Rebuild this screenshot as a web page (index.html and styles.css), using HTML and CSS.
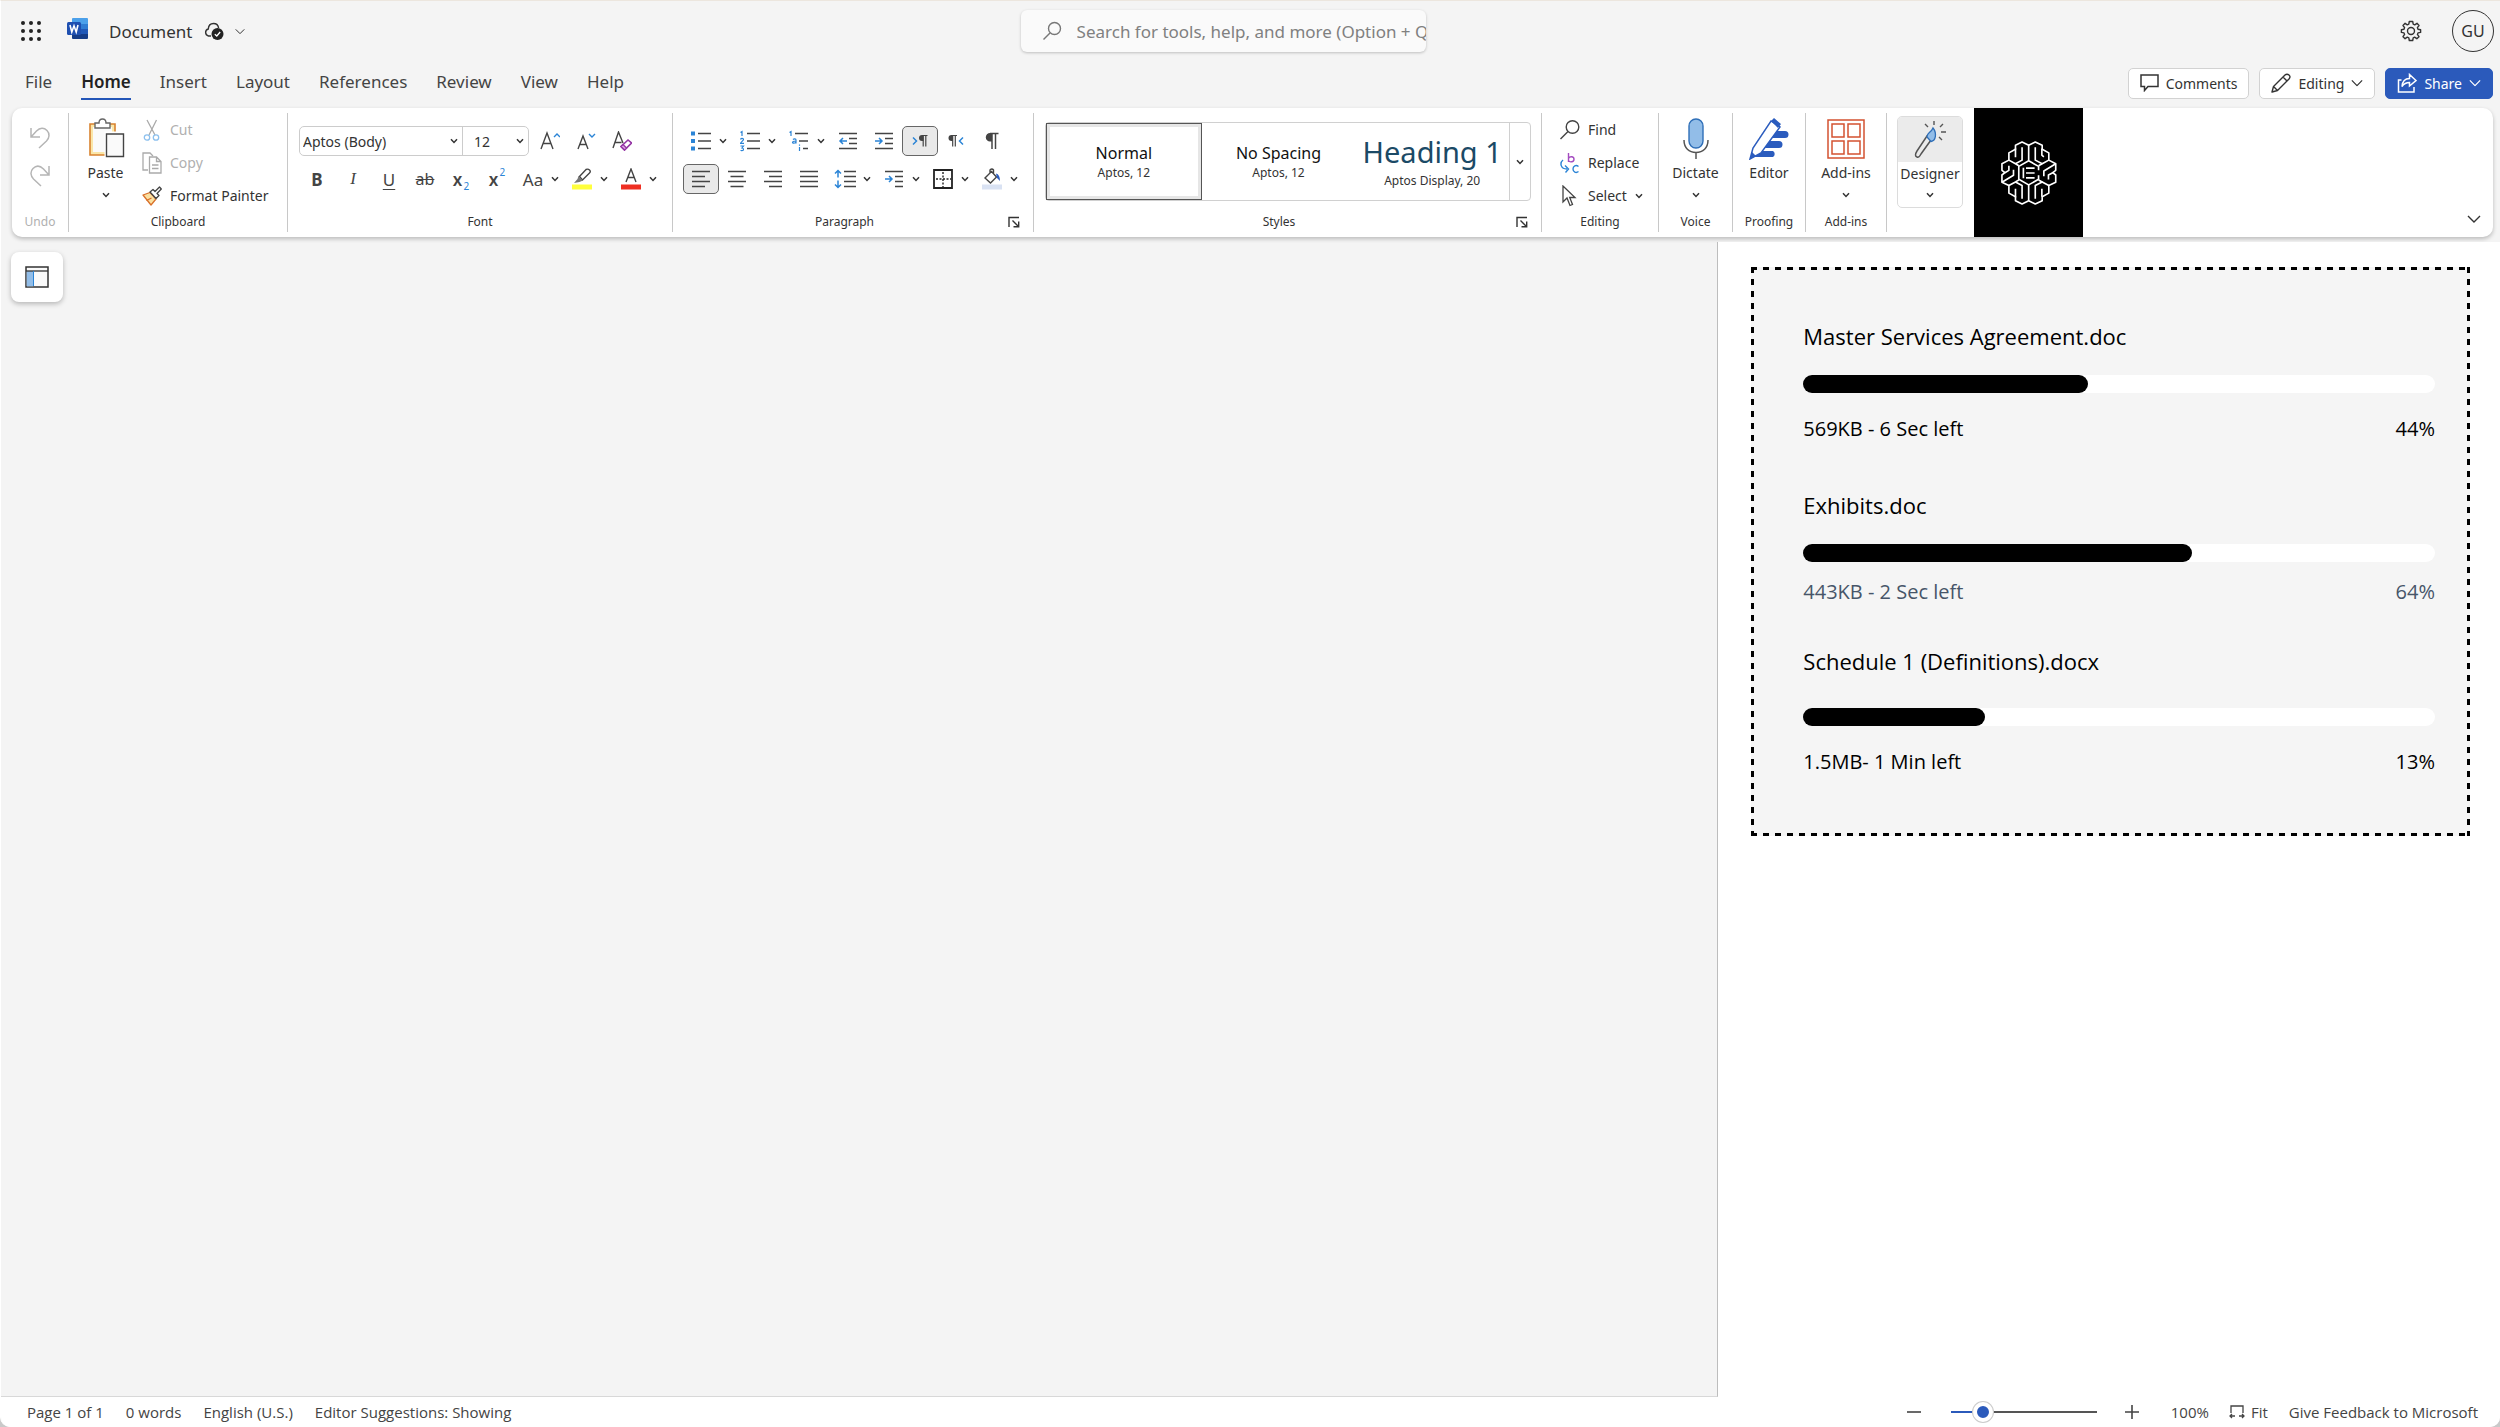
FILE: index.html
```html
<!DOCTYPE html>
<html lang="en">
<head>
<meta charset="utf-8">
<title>Document</title>
<meta name="viewport" content="width=device-width, initial-scale=1">
<link rel="stylesheet" href="styles.css">
</head>
<body>
<svg class="sprite" aria-hidden="true">
  <symbol id="chev" viewBox="0 0 8 6"><path d="M1 1.2 4 4.4 7 1.2" fill="none" stroke="currentColor" stroke-width="1.5"/></symbol>
  <symbol id="chev-lg" viewBox="0 0 14 8"><path d="M1 1 7 7 13 1" fill="none" stroke="currentColor" stroke-width="1.4"/></symbol>
  <symbol id="launch" viewBox="0 0 12 12"><path d="M1 11V1.500H11M4.500 4.500 10.500 10.500M10.700 5.500V10.700H5.500" fill="none" stroke="currentColor" stroke-width="1.4"/></symbol>
</svg>
<div class="app">
  <header class="topbar">
    <div class="brand">
      <button class="plain launcher" aria-label="App launcher"><svg width="22" height="22" viewBox="0 0 22 22" fill="#222"><circle cx="3" cy="3" r="2"/><circle cx="11" cy="3" r="2"/><circle cx="19" cy="3" r="2"/><circle cx="3" cy="11" r="2"/><circle cx="11" cy="11" r="2"/><circle cx="19" cy="11" r="2"/><circle cx="3" cy="19" r="2"/><circle cx="11" cy="19" r="2"/><circle cx="19" cy="19" r="2"/></svg></button>
      <svg class="word" width="22" height="22" viewBox="0 0 22 22"><path d="M6 0H20Q21 0 21 1V6H5V1Q5 0 6 0Z" fill="#4ba0ea"/><path d="M5 6H21V11H5Z" fill="#2f7cd3"/><path d="M5 11H21V16H5Z" fill="#1f58b8"/><path d="M5 16H21V20Q21 21 20 21H6Q5 21 5 20Z" fill="#143c87"/><rect y="4" width="14" height="13" rx="1.500" fill="#1e4fb0"/><path d="M3 7 4.800 14 7 7.800 9.200 14 11 7" fill="none" stroke="#fff" stroke-width="1.600"/></svg>
      <button class="plain doc-name">Document
        <svg width="20" height="20" viewBox="0 0 20 20"><path d="M7 15H4.500A3.600 3.600 0 0 1 4.300 8C4.500 4.500 6.500 2.500 9.500 2.500S14.300 4.500 14.600 7" fill="none" stroke="#333" stroke-width="1.400"/><circle cx="13.500" cy="13" r="6" fill="#222"/><path d="M10.800 13.200 12.800 15 16.200 11" fill="none" stroke="#fff" stroke-width="1.300"/></svg>
        <svg width="10" height="7" viewBox="0 0 14 8"><use href="#chev-lg"/></svg>
      </button>
    </div>
    <label class="search">
      <svg width="20" height="20" viewBox="0 0 20 20" fill="none" stroke="#777" stroke-width="1.400"><circle cx="12.500" cy="7.500" r="6"/><path d="M8 12 1.500 18.500"/></svg>
      <input type="text" aria-label="Search" placeholder="Search for tools, help, and more (Option + Q)">
    </label>
    <div class="account">
      <button class="plain" aria-label="Settings"><svg width="22" height="22" viewBox="0 0 22 22" fill="none" stroke="#333" stroke-width="1.400"><path d="M9.300 1.500H12.700L13.200 4.200 14.700 4.800 17 3.300 19 5.500 17.400 7.600 18 9.200 20.600 9.700V12.400L18 12.900 17.400 14.400 19 16.700 16.800 18.700 14.600 17.200 13.200 17.800 12.700 20.500H9.300L8.800 17.800 7.300 17.200 5.100 18.700 3 16.700 4.600 14.400 4 12.900 1.400 12.400V9.700L4 9.200 4.600 7.600 3 5.500 5.100 3.300 7.300 4.800 8.800 4.200Z" stroke-linejoin="round"/><circle cx="11" cy="11" r="3.500"/></svg></button>
      <button class="plain avatar">GU</button>
    </div>
  </header>

  <nav class="tabs" aria-label="Ribbon tabs">
    <a href="#file">File</a><a href="#home" class="active">Home</a><a href="#insert">Insert</a><a href="#layout">Layout</a><a href="#references">References</a><a href="#review">Review</a><a href="#view">View</a><a href="#help">Help</a>
    <div class="tab-actions">
      <button class="pill"><svg width="19" height="18" viewBox="0 0 19 18" fill="none" stroke="#333" stroke-width="1.500"><path d="M1 1H18V12.500H8L4.500 16.500V12.500H1Z"/></svg>Comments</button>
      <button class="pill"><svg width="20" height="20" viewBox="0 0 20 20" fill="none" stroke="#333" stroke-width="1.400" stroke-linejoin="round"><path d="M1 19 2.500 13.500 14 2Q16 .300 18 2T18 6L6.500 17.500ZM12 4 16 8M2.500 13.500 6.500 17.500"/></svg>Editing<svg width="12" height="8" viewBox="0 0 14 8"><use href="#chev-lg"/></svg></button>
      <button class="pill share"><svg width="20" height="20" viewBox="0 0 20 20" fill="none" stroke="#fff" stroke-width="1.500"><path d="M4.500 7H1.500V19H17V14M5 13.500C5.500 8 8.500 5.500 12.500 5.500V1.500L19 7.500 12.500 13V9.500C9 9.500 7 10.500 5 13.500Z"/></svg>Share<svg width="12" height="8" viewBox="0 0 14 8"><use href="#chev-lg"/></svg></button>
    </div>
  </nav>

  <section class="ribbon" aria-label="Ribbon">
    <div class="group g-undo">
      <div class="group-body stack">
        <button class="plain" aria-label="Undo"><svg width="22" height="24" viewBox="0 0 22 24" fill="none" stroke="#b5b5b5" stroke-width="1.500"><path d="M2 2V11H11M2 11 7.500 5C11 1.500 15 1.500 18 4.500S20.500 12 17.500 15L10 22"/></svg></button>
        <button class="plain" aria-label="Redo"><svg width="22" height="24" viewBox="0 0 22 24" fill="none" stroke="#b5b5b5" stroke-width="1.500"><path d="M20 2V11H11M20 11 14.500 5C11 1.500 7 1.500 4 4.500S1.500 12 4.500 15L12 22"/></svg></button>
      </div>
      <footer class="dim"><span>Undo</span></footer>
    </div>

    <div class="group g-clip">
      <div class="group-body clip">
        <button class="plain big"><svg width="38" height="40" viewBox="0 0 38 40"><path d="M3 6H28V37H3Z" fill="#fae6a8" stroke="#d9822f" stroke-width="1.600"/><path d="M6 9H25V34H6Z" fill="#fafafa"/><path d="M8 10V5H12C12 2.500 13.500 1 15.500 1S19 2.500 19 5H23V10Z" fill="#fff" stroke="#666" stroke-width="1.400"/><path d="M19 15H37V39H19Z" fill="#fff" stroke="#fff" stroke-width="3"/><path d="M19.500 16H36.500V38.500H19.500Z" fill="#fafafa" stroke="#444" stroke-width="1.400"/></svg><span>Paste</span><svg width="8" height="6"><use href="#chev"/></svg></button>
        <div class="lines">
          <button class="plain dim"><svg width="20" height="22" viewBox="0 0 20 22" fill="none" stroke-width="1.300"><path d="M5 1 13 16M14.500 1 7 16" stroke="#aaa"/><circle cx="5" cy="18.500" r="2.700" stroke="#8cc0ee"/><circle cx="14" cy="18.500" r="2.700" stroke="#8cc0ee"/></svg>Cut</button>
          <button class="plain dim"><svg width="20" height="22" viewBox="0 0 20 22" fill="#fff" stroke="#aaa" stroke-width="1.300"><path d="M6 18H1V1H8L11 4"/><path d="M7.500 5H14.500L19 9.500V21H7.500ZM14.500 5V9.500H19M10 13H16.500M10 16.500H16.500"/></svg>Copy</button>
          <button class="plain"><svg width="20" height="20" viewBox="0 0 20 20" stroke-width="1.300" stroke-linejoin="round"><path d="M1 9 8 6.500 14 13 9 19Z" fill="#fae0a0" stroke="#d9702a"/><path d="M4.500 14.500 9.500 12" stroke="#d9702a"/><path d="M8 6 11 3.500 13 5.500 17.500 1 19.300 3 15 7.500 17 9.500 14 12.500Z" fill="#fff" stroke="#444"/></svg>Format Painter</button>
        </div>
      </div>
      <footer><span>Clipboard</span></footer>
    </div>

    <div class="group g-font">
      <div class="group-body rows">
        <div class="row">
          <div class="combo">
            <div class="pick name"><select aria-label="Font name"><option>Aptos (Body)</option></select><svg width="8" height="6"><use href="#chev"/></svg></div>
            <div class="pick size"><select aria-label="Font size"><option>12</option></select><svg width="8" height="6"><use href="#chev"/></svg></div>
          </div>
          <button class="tool" aria-label="Increase font size"><svg width="20" height="20" viewBox="0 0 20 20" fill="none" stroke-width="1.400"><path d="M1 18 7 2 13 18M3.200 12.500H10.800" stroke="#444"/><path d="M14 6 17 3 20 6" stroke="#2b84d6"/></svg></button>
          <button class="tool" aria-label="Decrease font size"><svg width="20" height="20" viewBox="0 0 20 20" fill="none" stroke-width="1.400"><path d="M2 18 7 5 12 18M4 13.500H10" stroke="#444"/><path d="M13 3 16 6 19 3" stroke="#2b84d6"/></svg></button>
          <button class="tool" aria-label="Clear formatting"><svg width="20" height="20" viewBox="0 0 20 20" fill="none" stroke-width="1.400"><path d="M1 17 6.500 1 11 12M3 11.500H9.500" stroke="#444"/><path d="M9 15.500 16 9 19.500 12 12.500 19Z" fill="#fff" stroke="#9434a4" stroke-width="1.600"/><path d="M9 15.500 11 13.500 14.500 17 12.500 19Z" fill="#dca8e4" stroke="#9434a4"/></svg></button>
        </div>
        <div class="row">
          <button class="tool glyph bold">B</button>
          <button class="tool glyph italic">I</button>
          <button class="tool glyph under">U</button>
          <button class="tool glyph strike">ab</button>
          <button class="tool glyph script"><b>x</b><sub>2</sub></button>
          <button class="tool glyph script"><b>x</b><sup>2</sup></button>
          <button class="tool glyph">Aa</button><button class="drop" aria-label="Change case options"><svg width="8" height="6"><use href="#chev"/></svg></button>
          <button class="tool" aria-label="Highlight"><svg width="22" height="22" viewBox="0 0 22 22"><rect x="1" y="16.500" width="20" height="5" fill="#ffff3c"/><path d="M8.500 8.500 15 1.500Q17 .500 18.500 2T18.500 5L11.500 12Z" fill="none" stroke="#444" stroke-width="1.400"/><path d="M7.500 8 12 12.500 8.500 14 3 15 6.500 11Z" fill="#777"/></svg></button><button class="drop" aria-label="Highlight colors"><svg width="8" height="6"><use href="#chev"/></svg></button>
          <button class="tool" aria-label="Font color"><svg width="22" height="22" viewBox="0 0 22 22"><rect x="1" y="16.500" width="20" height="5" fill="#ef2f22"/><path d="M6 14 11 1 16 14M7.800 9.500H14.200" fill="none" stroke="#444" stroke-width="1.400"/></svg></button><button class="drop" aria-label="Font colors"><svg width="8" height="6"><use href="#chev"/></svg></button>
        </div>
      </div>
      <footer><span>Font</span></footer>
    </div>

    <div class="group g-para">
      <div class="group-body rows">
        <div class="row">
          <button class="tool" aria-label="Bullets"><svg width="20" height="20" viewBox="0 0 20 20" stroke="#444" stroke-width="1.500"><path d="M7 2.500H20M7 10H20M7 17.500H20"/><path d="M0 2.500H4M0 10H4M0 17.500H4" stroke="#2b84d6" stroke-width="4"/></svg></button><button class="drop" aria-label="Bullet options"><svg width="8" height="6"><use href="#chev"/></svg></button>
          <button class="tool" aria-label="Numbering"><svg width="20" height="22" viewBox="0 0 20 22" stroke="#444" stroke-width="1.500" fill="none"><path d="M7 3.500H20M7 11H20M7 18.500H20"/><path d="M.500 2.500 2 1.500V6M.500 9.500C1 8 3.500 8 3.500 9.500 3.500 10.500 1 12 .500 13.300H4M.500 16H3.500L2 18Q3.500 18 3.500 19.500T.500 20.500" stroke="#2b84d6" stroke-width="1.200"/></svg></button><button class="drop" aria-label="Numbering options"><svg width="8" height="6"><use href="#chev"/></svg></button>
          <button class="tool" aria-label="Multilevel list"><svg width="20" height="22" viewBox="0 0 20 22" stroke="#444" stroke-width="1.500" fill="none"><path d="M6 3.500H19M10 11H19M14 18.500H19"/><path d="M.500 2.500 2 1.500V6M4 9.500C5 8.500 7 8.500 7 10V13.500M7 11C5 11 3.500 11.500 3.500 12.500S6 13.500 7 12M10.500 17V21M10.500 14.500V15.800" stroke="#2b84d6" stroke-width="1.200"/></svg></button><button class="drop" aria-label="Multilevel options"><svg width="8" height="6"><use href="#chev"/></svg></button>
          <button class="tool" aria-label="Decrease indent"><svg width="20" height="20" viewBox="0 0 20 20" stroke="#444" stroke-width="1.500" fill="none"><path d="M1 2.500H19M11 7.500H19M11 12.500H19M1 17.500H19"/><path d="M9 10H2M5 7 2 10 5 13" stroke="#2b84d6"/></svg></button>
          <button class="tool" aria-label="Increase indent"><svg width="20" height="20" viewBox="0 0 20 20" stroke="#444" stroke-width="1.500" fill="none"><path d="M1 2.500H19M11 7.500H19M11 12.500H19M1 17.500H19"/><path d="M1 10H8M5 7 8 10 5 13" stroke="#2b84d6"/></svg></button>
          <button class="tool on" aria-label="Left to right"><svg width="16" height="14" viewBox="0 0 16 14" fill="none" stroke-width="1.500"><path d="M1 3.500 4.500 7 1 10.500" stroke="#2b84d6"/><path d="M11.200 1.500V12.500M13.800 1.500V12.500M10 1.500H15.500" stroke="#444" stroke-width="1.200"/><path d="M11.500 1H10A2.800 2.800 0 0 0 10 7H11.500Z" fill="#444"/></svg></button>
          <button class="tool" aria-label="Right to left"><svg width="16" height="14" viewBox="0 0 16 14" fill="none" stroke-width="1.500"><path d="M15 3.500 11.500 7 15 10.500" stroke="#2b84d6"/><path d="M4.700 1.500V12.500M7.300 1.500V12.500M3 1.500H9" stroke="#444" stroke-width="1.200"/><path d="M5 1H3.500A2.800 2.800 0 0 0 3.500 7H5Z" fill="#444"/></svg></button>
          <button class="tool" aria-label="Show formatting marks"><svg width="14" height="18" viewBox="0 0 14 18" fill="none"><path d="M7 1.500V17M10.500 1.500V17M5 1.500H13.500" stroke="#444" stroke-width="1.500"/><path d="M7 1H5A4 4 0 0 0 5 9.500H7Z" fill="#444"/></svg></button>
        </div>
        <div class="row">
          <button class="tool on" aria-label="Align left"><svg width="18" height="18" viewBox="0 0 18 18" stroke="#444" stroke-width="1.500"><path d="M0 1.500H18M0 6.500H13M0 11.500H18M0 16.500H13"/></svg></button>
          <button class="tool" aria-label="Center"><svg width="18" height="18" viewBox="0 0 18 18" stroke="#444" stroke-width="1.500"><path d="M0 1.500H18M2.500 6.500H15.500M0 11.500H18M2.500 16.500H15.500"/></svg></button>
          <button class="tool" aria-label="Align right"><svg width="18" height="18" viewBox="0 0 18 18" stroke="#444" stroke-width="1.500"><path d="M0 1.500H18M5 6.500H18M0 11.500H18M5 16.500H18"/></svg></button>
          <button class="tool" aria-label="Justify"><svg width="18" height="18" viewBox="0 0 18 18" stroke="#444" stroke-width="1.500"><path d="M0 1.500H18M0 6.500H18M0 11.500H18M0 16.500H18"/></svg></button>
          <button class="tool" aria-label="Line spacing"><svg width="22" height="20" viewBox="0 0 22 20" stroke="#444" stroke-width="1.500" fill="none"><path d="M10 2.500H22M10 7.500H22M10 12.500H22M10 17.500H22"/><path d="M4 8.500V2M1 4.500 4 1.500 7 4.500M4 11.500V18M1 15.500 4 18.500 7 15.500" stroke="#2b84d6"/></svg></button><button class="drop" aria-label="Spacing options"><svg width="8" height="6"><use href="#chev"/></svg></button>
          <button class="tool" aria-label="Special indent"><svg width="20" height="20" viewBox="0 0 20 20" stroke="#444" stroke-width="1.500" fill="none"><path d="M1 2.500H19M11 7.500H19M11 12.500H19M11 17.500H19"/><path d="M1 10H8M5 7 8 10 5 13" stroke="#2b84d6"/></svg></button><button class="drop" aria-label="Indent options"><svg width="8" height="6"><use href="#chev"/></svg></button>
          <button class="tool" aria-label="Borders"><svg width="20" height="20" viewBox="0 0 20 20" stroke="#222" fill="none"><path d="M1 1H19V19H1Z" stroke-width="1.800"/><path d="M10 3V18M3 10H18" stroke-width="1.400" stroke-dasharray="2 1.500"/></svg></button><button class="drop" aria-label="Border options"><svg width="8" height="6"><use href="#chev"/></svg></button>
          <button class="tool" aria-label="Shading"><svg width="22" height="22" viewBox="0 0 22 22" fill="none"><rect x="1" y="16.500" width="20" height="5" fill="#d9e2f3"/><path d="M4 10 10.500 3.500 15.500 9 9.500 15ZM9 5V2Q11 0 12.500 2V5" stroke="#444" stroke-width="1.400"/><path d="M15 5.500Q19 6.500 19 13L16 10Z" fill="#2b5cbe"/></svg></button><button class="drop" aria-label="Shading colors"><svg width="8" height="6"><use href="#chev"/></svg></button>
        </div>
      </div>
      <footer><span>Paragraph</span><button class="plain" aria-label="Paragraph settings"><svg width="12" height="12"><use href="#launch"/></svg></button></footer>
    </div>

    <div class="group g-styles">
      <div class="group-body">
        <div class="gallery">
          <button class="style selected"><span class="sample">Normal</span><small>Aptos, 12</small></button>
          <button class="style"><span class="sample">No Spacing</span><small>Aptos, 12</small></button>
          <button class="style"><span class="sample heading">Heading 1</span><small>Aptos Display, 20</small></button>
          <button class="more" aria-label="More styles"><svg width="8" height="6"><use href="#chev"/></svg></button>
        </div>
      </div>
      <footer><span>Styles</span><button class="plain" aria-label="Style settings"><svg width="12" height="12"><use href="#launch"/></svg></button></footer>
    </div>

    <div class="group g-edit">
      <div class="group-body lines">
        <button class="plain"><svg width="20" height="20" viewBox="0 0 20 20" fill="none" stroke="#444" stroke-width="1.400"><circle cx="12.500" cy="7" r="6.300"/><path d="M8 11.500 .500 19"/></svg>Find</button>
        <button class="plain"><svg width="20" height="22" viewBox="0 0 20 22" fill="none" stroke-width="1.400"><path d="M8.500 1V10M8.500 6.500C9.500 4 14 4 14 7.200S9.500 10.500 8.500 8.500" stroke="#a44bc0"/><path d="M18.500 14.500C16 12.500 13 14 13 17S16 21.500 18.500 19.500M3 8C-.500 11 .500 17 7 17M5 13.500 8.500 17 5.500 20.500" stroke="#2b84d6"/></svg>Replace</button>
        <button class="plain"><svg width="20" height="22" viewBox="0 0 20 22" fill="none" stroke="#444" stroke-width="1.300"><path d="M3 1V17L7 13 10 20.500 12.500 19.500 9.700 12.500H15Z"/></svg>Select<svg width="8" height="6"><use href="#chev"/></svg></button>
      </div>
      <footer><span>Editing</span></footer>
    </div>

    <div class="group g-voice">
      <div class="group-body"><button class="plain big"><svg width="26" height="42" viewBox="0 0 26 42"><rect x="6" y="1" width="14" height="29" rx="7" fill="#92bde8" stroke="#2f6fb8" stroke-width="1.400"/><path d="M1 22C1 30 6 34.500 13 34.500S25 30 25 22M13 34.500V41" fill="none" stroke="#555" stroke-width="1.500"/></svg><span>Dictate</span><svg width="8" height="6"><use href="#chev"/></svg></button></div>
      <footer><span>Voice</span></footer>
    </div>
    <div class="group g-proof">
      <div class="group-body"><button class="plain big"><svg width="40" height="42" viewBox="0 0 40 42"><path d="M22 13H36A3.500 3.500 0 0 1 36 20H18ZM17 23H30A3.500 3.500 0 0 1 30 30H12ZM12 33H24A3.500 3.500 0 0 1 24 39H5Z" fill="#2b5cbe"/><path d="M1 41 4 30 22 3 31 9 12 35Z" fill="#fff" stroke="#2b5cbe" stroke-width="1.500"/><path d="M22 3 25 0 32 6 29 10ZM1 41 3 34 7 38Z" fill="#2b5cbe"/></svg><span>Editor</span></button></div>
      <footer><span>Proofing</span></footer>
    </div>
    <div class="group g-add">
      <div class="group-body"><button class="plain big"><svg width="38" height="42" viewBox="0 0 38 42" fill="none" stroke="#d35230" stroke-width="1.500"><path d="M1 2H37V40H1ZM5 6H17V19H5ZM21 6H33V19H21ZM5 23H17V36H5ZM21 23H33V36H21Z"/></svg><span>Add-ins</span><svg width="8" height="6"><use href="#chev"/></svg></button></div>
      <footer><span>Add-ins</span></footer>
    </div>
    <div class="group g-design">
      <button class="designer"><span class="art"><svg width="34" height="38" viewBox="0 0 34 38" fill="none"><path d="M4 36Q1 35 4 30L14 15 18 19 8 33Q6 37 4 36Z" stroke="#555" stroke-width="1.500"/><path d="M14 16C14 11 18 12 20 7 24 12 23 20 18 20.500Z" fill="#92bde8" stroke="#2f6fb8" stroke-width="1.300"/><path d="M21 0V4M12 3 15 6M30 3 27 6M28 11H33M26 16 29 19" stroke="#555" stroke-width="1.400"/></svg></span><span>Designer</span><svg width="8" height="6"><use href="#chev"/></svg></button>
    </div>
    <button class="brain" aria-label="Contract assistant"><svg width="56" height="64" viewBox="65 61 168 194" fill="none" stroke="#fff" stroke-width="5" stroke-linejoin="round"><path d="M88 119V97L108 86V74L128 64 148 74 168 64 189 74V86L209 97V119L230 130V150L221 157 230 164V186L209 196V219L189 230V242L168 252 148 242 128 252 108 242V230L88 219V196L67 186V164L76 157 67 150V130Z"/><path d="M88 119 108 130 128 119V80M108 84V110M148 74V120M168 80V119L189 130 209 119M188 84V104L194 109M88 196 108 185 128 196V236M108 206V232M148 193V242M168 236V196L189 185 209 196M188 230V206M88 136V150L76 157M67 186 102 165V148M108 130 118 136M189 130 178 136M108 185 118 179M189 185 178 179M230 130 194 152V168M221 157 208 164V178"/><path d="M178 150V138L148 121 118 138V177L148 194 178 177V165M132 142V174M140 143H166M140 158H166M140 173H166"/></svg></button>
    <button class="plain collapse" aria-label="Collapse ribbon"><svg width="14" height="8"><use href="#chev-lg"/></svg></button>
  </section>

  <main class="work">
    <section class="canvas" aria-label="Document area">
      <button class="nav-toggle" aria-label="Navigation pane"><svg width="24" height="22" viewBox="0 0 24 22"><path d="M1 1H23V21H1Z" fill="#fafafa" stroke="#333" stroke-width="1.500"/><path d="M1.700 5H8V20.300H1.700Z" fill="#92bde8"/><path d="M1 5H23" stroke="#333" stroke-width="1.300"/><path d="M8.500 5V20" stroke="#2b84d6"/></svg></button>
    </section>
    <aside class="panel">
      <div class="dropzone">
        <article class="upload">
          <h2>Master Services Agreement.doc</h2>
          <div class="track" role="progressbar" aria-label="Master Services Agreement.doc"><div class="fill" style="width:45%"></div></div>
          <p><span>569KB - 6 Sec left</span><span>44%</span></p>
        </article>
        <article class="upload compact">
          <h2>Exhibits.doc</h2>
          <div class="track" role="progressbar" aria-label="Exhibits.doc"><div class="fill" style="width:61.500%"></div></div>
          <p><span>443KB - 2 Sec left</span><span>64%</span></p>
        </article>
        <article class="upload roomy">
          <h2>Schedule 1 (Definitions).docx</h2>
          <div class="track" role="progressbar" aria-label="Schedule 1 (Definitions).docx"><div class="fill" style="width:28.700%"></div></div>
          <p><span>1.5MB- 1 Min left</span><span>13%</span></p>
        </article>
      </div>
    </aside>
  </main>

  <footer class="status">
    <span>Page 1 of 1</span><span>0 words</span><span>English (U.S.)</span><span>Editor Suggestions: Showing</span>
    <div class="zoom">
      <button class="plain" aria-label="Zoom out"><svg width="16" height="16" stroke="#444" stroke-width="1.600"><path d="M1 8H15"/></svg></button>
      <input type="range" aria-label="Zoom" min="0" max="100" value="18">
      <button class="plain" aria-label="Zoom in"><svg width="16" height="16" stroke="#444" stroke-width="1.600"><path d="M1 8H15M8 1V15"/></svg></button>
      <span class="level">100%</span>
      <button class="plain fit"><svg width="16" height="14" viewBox="0 0 16 14" fill="none" stroke="#444" stroke-width="1.300"><path d="M2 8V1H14V8M6 11H1M3 9 1 11 3 13M10 11H15M13 9 15 11 13 13"/></svg>Fit</button>
      <a href="#feedback">Give Feedback to Microsoft</a>
    </div>
  </footer>
</div>
</body>
</html>
```
FILE: styles.css
```css
* { box-sizing: border-box; }
body { margin: 0; background: #c9c9c9; font-family: "Noto Sans", "Open Sans", sans-serif; font-size: 14px; color: #333; }
button, input, select { font: inherit; color: inherit; margin: 0; }
a { color: inherit; text-decoration: none; }
svg { display: block; flex: none; }
.sprite { position: absolute; width: 0; height: 0; }
.plain { border: 0; background: none; padding: 0; display: flex; align-items: center; }
.dim, .plain.dim { color: #b0b0b0; }

.app { min-height: 100vh; display: flex; flex-direction: column; background: #f4f4f4; border-top: 1px solid #ece6de; border-left: 1px solid #fff; border-radius: 0 0 10px 10px; overflow: hidden; }

/* Title bar */
.topbar { display: grid; grid-template-columns: 1020fr 406fr 1074fr; align-items: center; height: 60px; }
.brand { display: flex; align-items: center; padding-left: 19px; font-size: 17px; }
.word { margin: 0 20px 4px 25px; }
.doc-name { gap: 11px; }
.search { display: flex; align-items: center; gap: 15px; height: 42px; padding-left: 21px; border-radius: 6px; background: #fafafa; box-shadow: 0 1px 3px rgba(0, 0, 0, .22); font-size: 17px; overflow: hidden; }
.search input { flex: 1; min-width: 0; border: 0; padding: 0; background: none; outline: 0; }
.search input::placeholder { color: #808080; opacity: 1; }
.account { display: flex; justify-content: flex-end; align-items: center; gap: 30px; padding-right: 6px; }
.avatar { width: 42px; height: 42px; justify-content: center; border: 1px solid #333; border-radius: 50%; font-size: 16px; }

/* Ribbon tabs */
.tabs { display: flex; align-items: center; gap: 29px; height: 47px; padding: 0 7px 3px 24px; font-size: 17px; color: #444; }
.tabs a { height: 34px; line-height: 32px; border-bottom: 2px solid transparent; }
.tabs .active { font-weight: 600; color: #222; border-color: #2456b8; }
.tab-actions { display: flex; gap: 10px; margin-left: auto; }
.pill { display: flex; align-items: center; gap: 7px; height: 31px; padding: 0 11px; border: 1px solid #d2d2d2; border-radius: 5px; background: #fff; font-size: 14px; color: #333; }
.pill.share { background: #2b5abb; border-color: #2b5abb; color: #fff; }

/* Ribbon */
.ribbon { display: flex; min-height: 129px; margin: 0 7px 0 11px; border-radius: 10px; background: #fff; box-shadow: 0 2px 4px rgba(0, 0, 0, .24); }
.group { display: flex; flex-direction: column; flex: none; margin: 5px 0; border-right: 1px solid #c8c8c8; }
.group-body { flex: 1; }
.group footer { display: grid; grid-template-columns: 26px 1fr 26px; align-items: center; height: 21px; font-size: 12px; line-height: 20px; }
.group footer span { grid-column: 2; text-align: center; white-space: nowrap; }
.g-voice footer, .g-proof footer, .g-add footer, .g-undo footer { grid-template-columns: 0 1fr 0; }
.g-para footer, .g-styles footer { grid-template-columns: 8px 1fr 25px; }
.g-undo { width: 57px; }
.g-clip { width: 219px; }
.g-font { width: 385px; }
.g-para { width: 361px; }
.g-styles { width: 508px; }
.g-edit { width: 117px; }
.g-voice { width: 74px; }
.g-proof { width: 73px; }
.g-add { width: 81px; }
.g-design { width: 87px; border: 0; padding: 3px 11px 0 10px; }

.stack { display: flex; flex-direction: column; align-items: center; gap: 14px; padding-top: 13px; }
.big { flex-direction: column; width: 100%; padding-top: 5px; line-height: 20px; }
.big span { margin: 3px 0 9px; }
.clip { display: flex; }
.clip .big { width: 73px; }
.clip .big span { margin-top: 5px; }
.lines { display: flex; flex-direction: column; gap: 11px; padding-top: 6px; line-height: 22px; }
.lines .plain { gap: 8px; height: 22px; white-space: nowrap; }
.lines.group-body { padding-left: 18px; }

.rows { display: flex; flex-direction: column; gap: 8px; padding: 13px 0 0 10px; }
.row { display: flex; height: 30px; }
.tool { display: flex; align-items: center; justify-content: center; width: 36px; height: 30px; padding: 0; border: 1px solid transparent; border-radius: 5px; background: none; }
.tool.on { background: #e9e9e9; border-color: #666; }
.drop { display: flex; align-items: center; justify-content: flex-start; width: 13px; padding: 0; border: 0; background: none; }
.glyph { font-size: 17px; color: #444; }
.bold { font-weight: 700; }
.italic { font-family: "Liberation Serif", serif; font-style: italic; }
.under { text-decoration: underline; text-underline-offset: 3px; }
.strike { text-decoration: line-through; font-size: 16px; }
.script { gap: 1px; }
.script b { font-weight: 600; }
.script sub, .script sup { font-size: 10px; color: #2b84d6; line-height: 12px; }
.script sub { padding-top: 14px; }
.script sup { padding-bottom: 14px; }
.g-font .rows { padding-left: 11px; }
.combo { display: flex; width: 230px; margin-right: 3px; border: 1px solid #ccc; border-radius: 5px; }
.pick { position: relative; display: flex; }
.pick.name { flex: 1; border-right: 1px solid #ccc; }
.pick.size { width: 65px; }
.pick select { appearance: none; width: 100%; border: 0; padding: 0 3px; background: none; color: #333; }
.pick.size select { padding-left: 11px; }
.pick svg { position: absolute; right: 4px; top: 11px; pointer-events: none; }

.gallery { display: flex; height: 79px; margin: 9px 10px 0 11px; border: 1px solid #d0d0d0; border-radius: 4px; }
.style { flex: 1; display: flex; flex-direction: column; align-items: center; justify-content: center; padding: 0; border: 0; background: none; color: #333; }
.style.selected { border: 1px solid #555; box-shadow: inset 0 0 0 3px #e6e6e6; }
.sample { font-size: 16px; line-height: 22px; color: #111; }
.style small { font-size: 12px; line-height: 18px; }
.sample.heading { font-size: 29px; line-height: 38px; color: #1b4a66; }
.heading + small { line-height: 20px; }
.more { display: flex; align-items: center; justify-content: center; width: 21px; padding: 0; border: 0; border-left: 1px solid #d0d0d0; background: none; }

.designer { display: flex; flex-direction: column; align-items: center; height: 92px; padding: 0; border: 1px solid #dcdcdc; border-radius: 5px; background: #fff; overflow: hidden; line-height: 20px; }
.designer .art { display: flex; justify-content: center; align-items: center; width: 100%; height: 45px; background: #ebebeb; }
.designer span + span { margin: 2px 0 8px; }
.brain { display: flex; align-items: center; justify-content: center; flex: none; width: 109px; padding: 0; border: 0; background: #000; }
.collapse { margin: 0 12px 14px auto; align-self: flex-end; }

/* Workspace */
.work { flex: 1; display: grid; grid-template-columns: 1718fr 782fr; margin-top: 5px; }
.canvas { border-right: 1px solid #bdbdbd; border-bottom: 1px solid #d8d8d8; padding: 10px; }
.nav-toggle { display: flex; align-items: center; justify-content: center; width: 52px; height: 50px; padding: 0; border: 0; border-radius: 8px; background: #fff; box-shadow: 0 2px 5px rgba(0, 0, 0, .25); }
.panel { background: #fff; padding: 25px 30px 0 33px; }
.dropzone {
  --h: repeating-linear-gradient(90deg, #000 0 6px, transparent 6px 12px);
  --v: repeating-linear-gradient(180deg, #000 0 6px, transparent 6px 12px);
  display: flex; flex-direction: column; padding: 54px 35px 60px 52px; color: #000; font-family: "Open Sans", "Noto Sans", sans-serif;
  background: var(--h) top / 100% 3px no-repeat, var(--h) bottom / 100% 3px no-repeat, var(--v) left / 3px 100% no-repeat, var(--v) right / 3px 100% no-repeat, #f5f5f5;
}
.upload { display: flex; flex-direction: column; gap: 22px; padding-bottom: 47px; }
.upload:last-child { padding-bottom: 0; }
.upload h2 { margin: 0 0 2px; font-size: 22px; line-height: 30px; font-weight: 400; }
.upload p { display: flex; justify-content: space-between; margin: 0; font-size: 20px; line-height: 28px; }
.upload.compact p { margin-top: -6px; color: #475569; }
.upload.compact { padding-bottom: 40px; }
.upload.roomy .track { margin-top: 8px; }
.track { height: 18px; border-radius: 9px; background: #fff; }
.fill { height: 100%; border-radius: 9px; background: #000; }

/* Status bar */
.status { display: flex; align-items: center; gap: 22px; height: 30px; padding: 0 22px 0 26px; background: #fff; color: #444; font-family: "Open Sans", "Noto Sans", sans-serif; font-size: 15px; }
.zoom { display: flex; align-items: center; margin-left: auto; }
.zoom input { appearance: none; width: 146px; height: 22px; margin: 0 27px 0 29px; background: linear-gradient(90deg, #2b5abb 22%, #555 22%) center / 100% 2px no-repeat; }
.zoom input::-webkit-slider-thumb { appearance: none; width: 20px; height: 20px; border: 4px solid #fff; border-radius: 50%; background: #2b5abb; box-shadow: 0 0 0 1px #ccc; }
.level { margin: 0 20px 0 31px; }
.fit { gap: 6px; margin-right: 21px; }
```
